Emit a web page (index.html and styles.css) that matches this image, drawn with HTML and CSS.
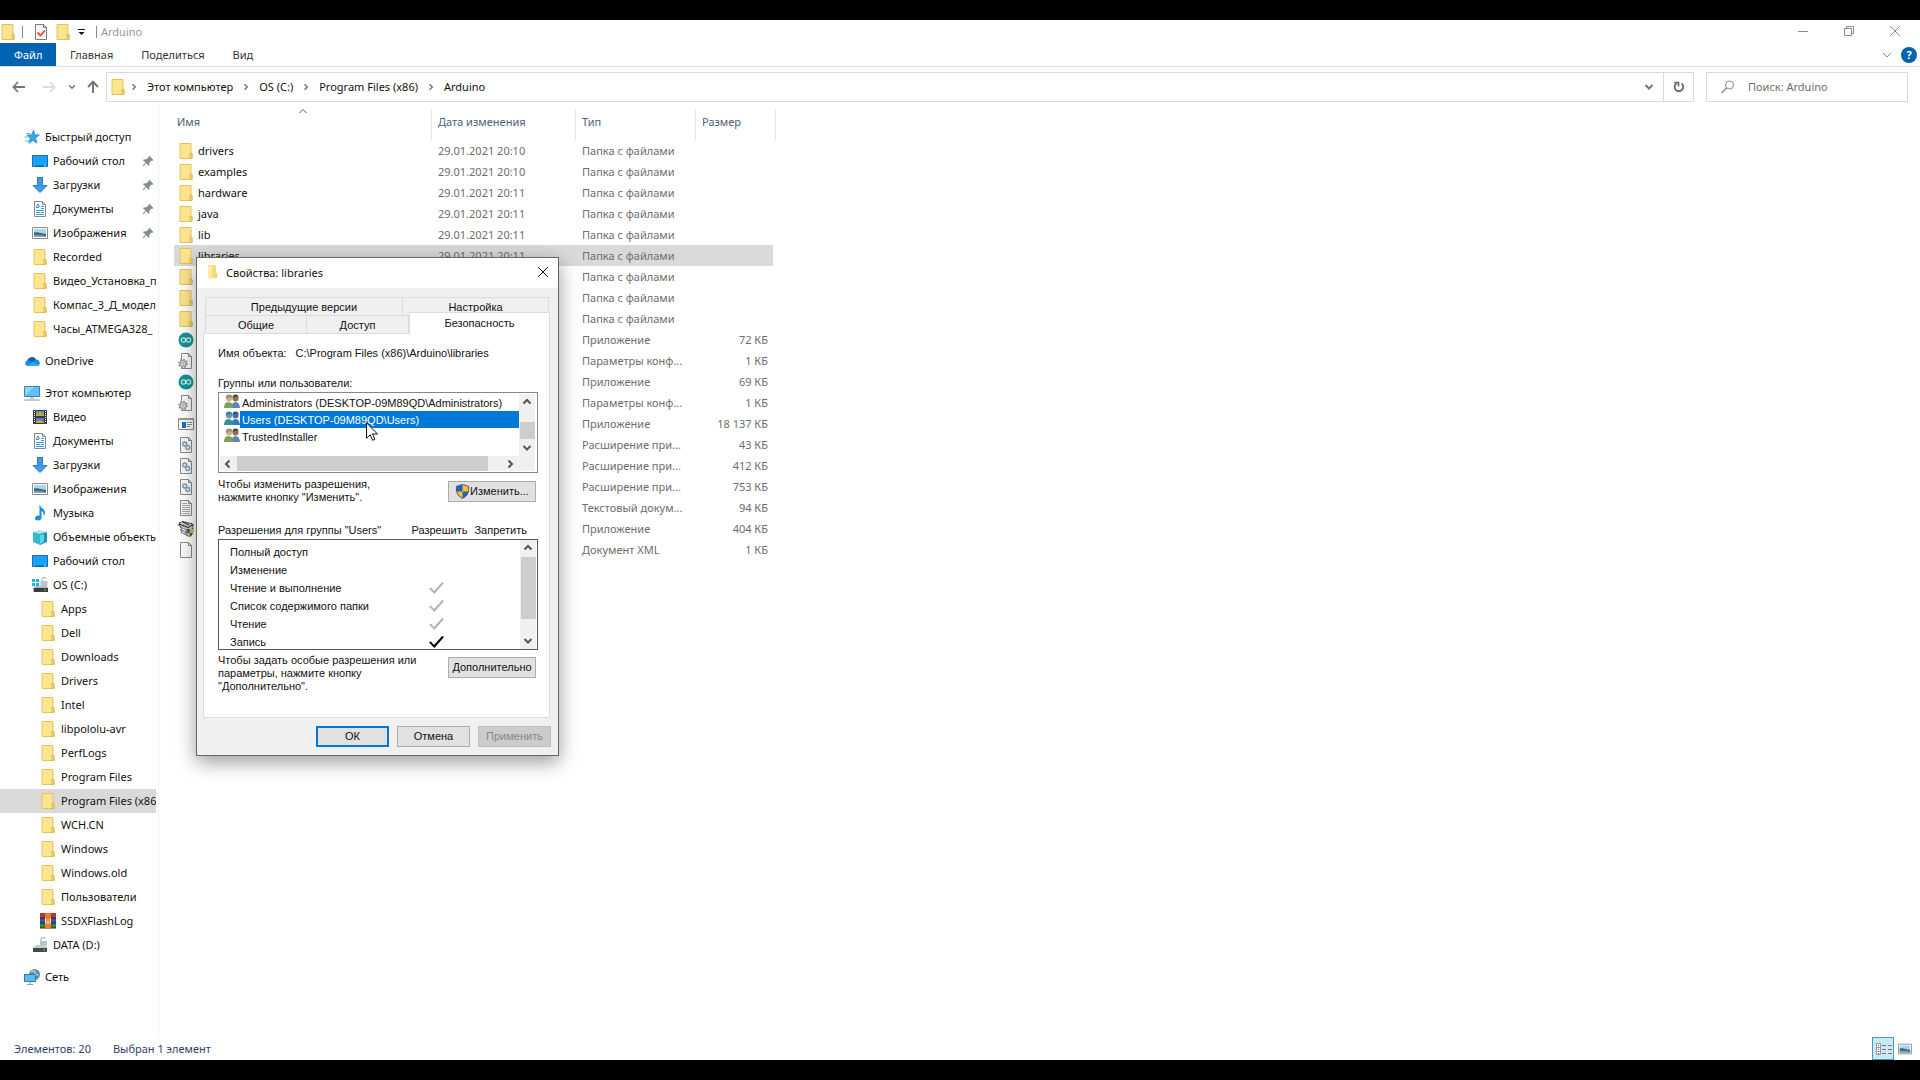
FILE: index.html
```html
<!DOCTYPE html>
<html lang="ru">
<head>
    <meta charset="UTF-8">
    <meta name="viewport" content="width=device-width, initial-scale=1.0">
    <title>Arduino</title>
    <link rel="stylesheet" href="styles.css">
</head>
<body>
    <!-- icon set -->
    <svg class="icon-defs" aria-hidden="true">
        <symbol id="i-folder" viewBox="0 0 16 16">
            <path d="M2 .5h11v10h1v5H2z" fill="#fde48e" stroke="#e6c35a"/>
            <path d="M12 15.500v-5h2v5z" fill="#fbdc78" stroke="#dcb74f"/>
        </symbol>
        <symbol id="i-folder-open" viewBox="0 0 16 16">
            <path d="M4 1h8v13H4z" fill="#fbd978"/>
            <path d="M4 1l4 2v13l-4-2z" fill="#ffebab"/>
            <path d="M12 9h1v5h-2z" fill="#f3cc62"/>
        </symbol>
        <symbol id="i-props" viewBox="0 0 16 16">
            <path d="M2.500.5h8l3 3v12h-11z" fill="#f8f8f8" stroke="#7d7d7d"/>
            <path d="M10.500.5v3h3" fill="none" stroke="#7d7d7d"/>
            <path d="M4.500 8.500l3 3 4.500-5" fill="none" stroke="#d9532c" stroke-width="1.800"/>
        </symbol>
        <symbol id="i-star" viewBox="0 0 16 16">
            <path d="M9.500 1l1.300 4.700 4.700.2-3.900 3 1.400 5.300-4.200-2.800-4 3.100 1.300-5.200L3 6l4.700-.3z" fill="#35a7ea" stroke="#1b7fc4" stroke-width=".6"/>
            <path d="M2 4.500h4M.5 8h4M1 12h4" stroke="#5db9ef"/>
        </symbol>
        <symbol id="i-desktop" viewBox="0 0 16 16">
            <path d="M.5 2.500h15v11H.5z" fill="#18a0fb" stroke="#1271b8"/>
            <path d="M1 13h14" stroke="#0b5c9c"/>
            <path d="M2 13h1M12 13h2" stroke="#c5e6ff"/>
        </symbol>
        <symbol id="i-down" viewBox="0 0 16 16">
            <path d="M5.500.5h5v8h4.500L8 15.500 1 8.500h4.500z" fill="#3f9be6" stroke="#2b7cc2"/>
        </symbol>
        <symbol id="i-doc" viewBox="0 0 16 16">
            <path d="M2.500.5h8l3 3v12h-11z" fill="#fff" stroke="#828a91"/>
            <path d="M10.500.5v3h3" fill="#ddd" stroke="#828a91"/>
            <path d="M4 6.500h3M9 5.500h3M9 7.500h3M4 9.500h8M4 11.500h4M4 13.500h8M9 11.500h3" stroke="#3c9ad6"/>
            <path d="M4.500 6l1.500-3 1.500 3" fill="none" stroke="#2f86c4"/>
        </symbol>
        <symbol id="i-pic" viewBox="0 0 16 16">
            <path d="M.5 2.500h15v11H.5z" fill="#fff" stroke="#8a8a8a"/>
            <path d="M2 4h12v8H2z" fill="#a9d3f5"/>
            <path d="M2 7.500c4-1 7 1 12 1.500v3H2z" fill="#3d6a78"/>
            <path d="M2 10.500c4-1 8 0 12 .5v1H2z" fill="#7fa6b8"/>
        </symbol>
        <symbol id="i-pin" viewBox="0 0 16 16">
            <path d="M9.500 3l4 4-1 .8-.9-.4-2.300 2.400.3 2.200-1 .8-2.400-2.500L3 13.500l-.5-.5 3-3.400L3 7.200l.9-1 2.200.4 2.300-2.300-.1-.6z" fill="#7f8b95"/>
        </symbol>
        <symbol id="i-cloud" viewBox="0 0 16 16">
            <path d="M3 13a3 3 0 0 1 0-5.500A5 5 0 0 1 12 6.500a3.500 3.500 0 0 1 2 6.500z" fill="#1b8be0"/>
            <path d="M4 7a4.500 4.500 0 0 1 8-.5L8 9z" fill="#0d5fb3"/>
            <path d="M3 13l6-4 6 3-1 1z" fill="#2fa8f0"/>
        </symbol>
        <symbol id="i-pc" viewBox="0 0 16 16">
            <path d="M.5 1.500h15v10H.5z" fill="#5cc0fa" stroke="#4b7f9e"/>
            <path d="M1 11V2h9z" fill="#8ad6ff"/>
            <path d="M6 13h4M0 15h16" stroke="#8b9aa4"/>
        </symbol>
        <symbol id="i-video" viewBox="0 0 16 16">
            <path d="M1 1h14v14H1z" fill="#3a3a3a"/>
            <path d="M4 2h8v5H4z" fill="#5d8fd6"/>
            <path d="M4 9h8v5H4z" fill="#4d7ec5"/>
            <path d="M4 5l4-2 4 3v1H4zM4 12l4-1 4 2v1H4z" fill="#c3a53a"/>
            <path d="M2.500 2v12M13.500 2v12" stroke="#fff" stroke-dasharray="1 1"/>
        </symbol>
        <symbol id="i-music" viewBox="0 0 16 16">
            <path d="M8 0c.5 3 5 4 5 7.500 0 1.500-.6 2.500-1.500 3.500.6-3-.5-4.200-2-5V13c0 1.500-1.500 2.500-3.500 2.500S3 14.500 3 13.200C3 11.500 5.500 10 7.500 10.700V0z" fill="#1690dc"/>
        </symbol>
        <symbol id="i-cube" viewBox="0 0 16 16">
            <path d="M1 3l6-2 8 2-7 3z" fill="#a4e9f2"/>
            <path d="M1 3l7 2v11l-7-3z" fill="#36b8cb"/>
            <path d="M8 5l7-2v10l-7 3z" fill="#1e93a9"/>
            <path d="M8 6l4-1v8l-4 2z" fill="#5fd2e0"/>
        </symbol>
        <symbol id="i-osdrive" viewBox="0 0 16 16">
            <path d="M0 2h3v3H0zM4 2h3v3H4zM0 6h3v3H0zM4 6h3v3H4z" fill="#1fb2ea"/>
            <path d="M10 4V2.500a2 2 0 0 1 4-.5" fill="none" stroke="#9ab"/>
            <path d="M8.500 4h7v5h-7z" fill="#b9c4cc"/>
            <path d="M3 9h12l1 2v4H1v-4z" fill="#b8bcc0"/>
            <path d="M2 11h14v4H2z" fill="#3a3d40"/>
            <path d="M12 13h2" stroke="#4be04b"/>
        </symbol>
        <symbol id="i-drive" viewBox="0 0 16 16">
            <path d="M9 4V2.500a2 2 0 0 1 4-.5" fill="none" stroke="#8fa3b3"/>
            <path d="M8 4h7v5H8z" fill="#b3c3cf"/>
            <path d="M4 8h9l2 3H1z" fill="#c9cccf"/>
            <path d="M1 11h14v4H1z" fill="#45484b"/>
            <path d="M11 13h2" stroke="#4be04b"/>
        </symbol>
        <symbol id="i-rar" viewBox="0 0 16 16">
            <path d="M0 0h16v5H0z" fill="#b8324a"/>
            <path d="M0 5h16v5H0z" fill="#3650b0"/>
            <path d="M0 10h16v5H0z" fill="#2b8a3c"/>
            <path d="M0 5h16M0 10h16M0 15h16" stroke="#222"/>
            <path d="M5 0h6v15H5z" fill="#ee7a2c"/>
            <path d="M5.500 5v5h5V5M8 6v3" stroke="#f4e4c8" fill="none"/>
        </symbol>
        <symbol id="i-net" viewBox="0 0 16 16">
            <circle cx="10.500" cy="5.500" r="5.500" fill="#5d8ea8"/>
            <path d="M7 3c2-2 5-1 4 1s2 3 3 1" fill="none" stroke="#a8d3e4" stroke-width="1.500"/>
            <path d="M.5 5.500h11v7H.5z" fill="#55bdf9" stroke="#44748e"/>
            <path d="M5 14h2M3 15.500h6" stroke="#8b9aa4"/>
        </symbol>
        <symbol id="i-arduino" viewBox="0 0 16 16">
            <circle cx="8" cy="8" r="7.500" fill="#179297"/>
            <circle cx="5.500" cy="8" r="2.200" fill="none" stroke="#c8ecec" stroke-width="1.200"/>
            <circle cx="10.500" cy="8" r="2.200" fill="none" stroke="#c8ecec" stroke-width="1.200"/>
        </symbol>
        <symbol id="i-page" viewBox="0 0 16 16">
            <path d="M2.500.5h8l3 3v12h-11z" fill="#fafafa" stroke="#8a8a8a"/>
            <path d="M10.500.5v3h3" fill="none" stroke="#8a8a8a"/>
        </symbol>
        <symbol id="i-ini" viewBox="0 0 16 16">
            <path d="M3.500.5h7l3 3v12h-10z" fill="#fafafa" stroke="#8a8a8a"/>
            <path d="M10.500.5v3h3" fill="none" stroke="#8a8a8a"/>
            <circle cx="5" cy="10.500" r="4" fill="#ddd" stroke="#8c8c8c" stroke-width="1.600" stroke-dasharray="1.600 1.500"/>
            <circle cx="5" cy="10.500" r="2.900" fill="#eee" stroke="#8c8c8c"/>
            <circle cx="5" cy="10.500" r="1" fill="#fff" stroke="#8c8c8c" stroke-width=".8"/>
        </symbol>
        <symbol id="i-dll" viewBox="0 0 16 16">
            <path d="M2.500.5h8l3 3v12h-11z" fill="#fafafa" stroke="#8a8a8a"/>
            <path d="M10.500.5v3h3" fill="none" stroke="#8a8a8a"/>
            <circle cx="6.700" cy="7" r="2" fill="#e6e6e6" stroke="#8c9298" stroke-width="1.300"/>
            <circle cx="9.700" cy="10.500" r="2" fill="#e3f0fa" stroke="#7fa3bd" stroke-width="1.300"/>
        </symbol>
        <symbol id="i-exe" viewBox="0 0 16 16">
            <path d="M.5 2.500h15v11H.5z" fill="#fff" stroke="#8a8a8a"/>
            <path d="M0 3h16" stroke="#9a9a9a" stroke-width="2"/>
            <path d="M4 6h4v6H4z" fill="#1473c8"/>
            <path d="M9 6.500h5M9 8.500h5M9 10.500h3" stroke="#8a8a8a"/>
        </symbol>
        <symbol id="i-txt" viewBox="0 0 16 16">
            <path d="M2.500.5h8l3 3v12h-11z" fill="#fafafa" stroke="#8a8a8a"/>
            <path d="M10.500.5v3h3" fill="none" stroke="#8a8a8a"/>
            <path d="M4 3.500h5M4 5.500h8M4 7.500h8M4 9.500h8M4 11.500h8M4 13.500h8" stroke="#a5a5a5"/>
        </symbol>
        <symbol id="i-uninst" viewBox="0 0 16 16">
            <path d="M1 2l4-1.500 10 2.500v8l-4 4.500-8-4.500V6L1 5z" fill="#c4c4c4" stroke="#111" stroke-dasharray="2 1"/>
            <path d="M1 3l9 3.500 5-3M5 1l6 3" stroke="#222" fill="none"/>
            <path d="M3 6l6 2.500v6L3 11z" fill="#8d8d8d"/>
            <path d="M4 8l4 2M4 10.500l3 1.500" stroke="#fff"/>
            <path d="M8.500 8H15v4q-1 3-3.300 4-2.200-1-3.200-4z" fill="#f3b32b"/>
            <path d="M8.500 8h3.300v4H8.500zM11.800 12H15q-1 3-3.200 4z" fill="#1c62b8"/>
        </symbol>
        <symbol id="i-users" viewBox="0 0 16 16">
            <circle cx="11.500" cy="4.500" r="3" fill="#9a6b4a"/>
            <path d="M8.500 4q0-3.500 3-3.500t3 3l-1.500-1-3 .5z" fill="#4b4038"/>
            <path d="M7.500 14q0-6 4-6t4.500 6z" fill="#5d83c0"/>
            <circle cx="5" cy="4.500" r="3" fill="#d5aa80"/>
            <path d="M2 5Q1 .5 5 .5T8 4L5 3z" fill="#8f9475"/>
            <path d="M0 14q0-6 4.500-6T9 14z" fill="#7ea255"/>
        </symbol>
        <symbol id="i-users-sel" viewBox="0 0 16 16">
            <circle cx="11.500" cy="4.500" r="3" fill="#44709c"/>
            <path d="M8.500 4q0-3.500 3-3.500t3 3l-1.500-1-3 .5z" fill="#244f82"/>
            <path d="M7.500 14q0-6 4-6t4.500 6z" fill="#2c7ecb"/>
            <circle cx="5" cy="4.500" r="3" fill="#6693ae"/>
            <path d="M2 5Q1 .5 5 .5T8 4L5 3z" fill="#3c84a6"/>
            <path d="M0 14q0-6 4.500-6T9 14z" fill="#398f93"/>
        </symbol>
        <symbol id="i-shield" viewBox="0 0 16 16">
            <path d="M8 .5l6.500 2v5q-.5 5-6.500 8-6-3-6.500-8v-5z" fill="#fbbd37"/>
            <path d="M8 .5v7.500H1.500V2.500zM8 8h6.500q-1 5-6.500 7.500z" fill="#1766c0"/>
            <path d="M8 .5l6.500 2v5q-.5 5-6.500 8-6-3-6.500-8v-5z" fill="none" stroke="#4d5a66"/>
        </symbol>
        <symbol id="i-back" viewBox="0 0 16 16">
            <path d="M14 8H2.500M7 3L2.300 8 7 13" fill="none" stroke="currentColor" stroke-width="1.800"/>
        </symbol>
        <symbol id="i-forward" viewBox="0 0 16 16">
            <path d="M2 8h11.500M9 3l4.700 5L9 13" fill="none" stroke="currentColor" stroke-width="1.800"/>
        </symbol>
        <symbol id="i-up" viewBox="0 0 16 16">
            <path d="M8 14V3M3 8l5-5.200L13 8" fill="none" stroke="currentColor" stroke-width="2"/>
        </symbol>
        <symbol id="i-chev-d" viewBox="0 0 10 10">
            <path d="M1.500 3L5 6.500 8.500 3" fill="none" stroke="currentColor" stroke-width="2"/>
        </symbol>
        <symbol id="i-chev-u" viewBox="0 0 10 10">
            <path d="M1.500 6.500L5 3l3.500 3.500" fill="none" stroke="currentColor" stroke-width="2"/>
        </symbol>
        <symbol id="i-chev-r" viewBox="0 0 10 10">
            <path d="M3.500 1.500L7 5 3.500 8.500" fill="none" stroke="currentColor" stroke-width="2"/>
        </symbol>
        <symbol id="i-chev-l" viewBox="0 0 10 10">
            <path d="M6.500 1.500L3 5l3.500 3.500" fill="none" stroke="currentColor" stroke-width="2"/>
        </symbol>
        <symbol id="i-crumb" viewBox="0 0 10 10">
            <path d="M3.500 2.200L6.300 5 3.500 7.800" fill="none" stroke="currentColor" stroke-width="1.500"/>
        </symbol>
        <symbol id="i-recent" viewBox="0 0 10 10">
            <path d="M2.200 3.500L5 6.300 7.800 3.500" fill="none" stroke="currentColor" stroke-width="1.500"/>
        </symbol>
        <symbol id="i-thin-d" viewBox="0 0 10 10">
            <path d="M1 3l4 4 4-4" fill="none" stroke="currentColor"/>
        </symbol>
        <symbol id="i-thin-u" viewBox="0 0 10 10">
            <path d="M1.500 7L5 3.500 8.500 7" fill="none" stroke="currentColor"/>
        </symbol>
        <symbol id="i-qat" viewBox="0 0 10 10">
            <path d="M1 2.500h7" stroke="#111"/>
            <path d="M1.500 5h6l-3 3z" fill="#111"/>
        </symbol>
        <symbol id="i-min" viewBox="0 0 10 10">
            <path d="M0 5.500h10" stroke="currentColor"/>
        </symbol>
        <symbol id="i-restore" viewBox="0 0 10 10">
            <path d="M.5 2.500h7v7h-7zM2.500 2.500v-2h7v7h-2" fill="none" stroke="currentColor"/>
        </symbol>
        <symbol id="i-close" viewBox="0 0 10 10">
            <path d="M0 0l10 10M10 0L0 10" fill="none" stroke="currentColor"/>
        </symbol>
        <symbol id="i-refresh" viewBox="0 0 16 16">
            <path d="M10.500 4.500a4.300 4.300 0 1 1-4.800-.2" fill="none" stroke="currentColor" stroke-width="1.800"/>
            <path d="M3.200 3.500h4.300v4" fill="none" stroke="currentColor" stroke-width="1.600"/>
        </symbol>
        <symbol id="i-search" viewBox="0 0 16 16">
            <circle cx="9.500" cy="6" r="4" fill="none" stroke="currentColor"/>
            <path d="M6.500 9L1.500 14" stroke="currentColor" stroke-width="1.300"/>
        </symbol>
        <symbol id="i-details" viewBox="0 0 18 18">
            <path d="M2.500 3.500h4v11h-4zM2.500 7.500h4M2.500 11.500h4" fill="#fff" stroke="#999"/>
            <path d="M8 5.500h4M14 5.500h4M8 9.500h4M14 9.500h4M8 13.500h4M14 13.500h4" stroke="#777"/>
            <path d="M4 5.500h1M4 9.500h1" stroke="#555"/>
            <path d="M4 13.500h1" stroke="#c22"/>
        </symbol>
        <symbol id="i-cursor" viewBox="0 0 12 19">
            <path d="M.5.8v15.500l3.700-3.500 2.400 5.500 2.200-1-2.300-5.300h5z" fill="#fff" stroke="#111"/>
        </symbol>
    </svg>

    <div class="explorer">
        <header class="titlebar">
            <div class="quick-access">
                <svg class="icon"><use href="#i-folder"/></svg>
                <span class="divider"></span>
                <svg class="icon"><use href="#i-props"/></svg>
                <svg class="icon"><use href="#i-folder"/></svg>
                <svg class="icon-sm"><use href="#i-qat"/></svg>
                <span class="divider"></span>
            </div>
            <h1>Arduino</h1>
            <div class="window-controls">
                <button type="button" aria-label="Свернуть"><svg class="icon-sm"><use href="#i-min"/></svg></button>
                <button type="button" aria-label="Свернуть в окно"><svg class="icon-sm"><use href="#i-restore"/></svg></button>
                <button type="button" aria-label="Закрыть"><svg class="icon-sm"><use href="#i-close"/></svg></button>
            </div>
        </header>

        <div class="ribbon">
            <button type="button" class="file">Файл</button>
            <button type="button">Главная</button>
            <button type="button">Поделиться</button>
            <button type="button">Вид</button>
            <div class="ribbon-right">
                <svg class="icon-sm"><use href="#i-thin-d"/></svg>
                <button type="button" class="help">?</button>
            </div>
        </div>

        <div class="navbar">
            <div class="nav-buttons">
                <button type="button" aria-label="Назад"><svg class="icon"><use href="#i-back"/></svg></button>
                <button type="button" aria-label="Вперед" disabled><svg class="icon"><use href="#i-forward"/></svg></button>
                <button type="button" class="recent" aria-label="Последние расположения"><svg class="icon-sm"><use href="#i-recent"/></svg></button>
                <button type="button" class="up" aria-label="Вверх"><svg class="icon"><use href="#i-up"/></svg></button>
            </div>
            <div class="address">
                <svg class="icon"><use href="#i-folder"/></svg>
                <svg class="icon-sm"><use href="#i-crumb"/></svg>
                <a href="#">Этот компьютер</a>
                <svg class="icon-sm"><use href="#i-crumb"/></svg>
                <a href="#">OS (C:)</a>
                <svg class="icon-sm"><use href="#i-crumb"/></svg>
                <a href="#">Program Files (x86)</a>
                <svg class="icon-sm"><use href="#i-crumb"/></svg>
                <a href="#">Arduino</a>
                <button type="button" class="history" aria-label="Предыдущие расположения"><svg class="icon-sm"><use href="#i-chev-d"/></svg></button>
                <button type="button" class="refresh" aria-label="Обновить"><svg class="icon"><use href="#i-refresh"/></svg></button>
            </div>
            <label class="search">
                <svg class="icon"><use href="#i-search"/></svg>
                <input type="text" placeholder="Поиск: Arduino" aria-label="Поиск">
            </label>
        </div>

        <main class="content">
            <nav class="sidebar">
                <div class="group">
                    <a href="#" class="root"><svg class="icon"><use href="#i-star"/></svg><span>Быстрый доступ</span></a>
                    <a href="#"><svg class="icon"><use href="#i-desktop"/></svg><span>Рабочий стол</span><svg class="icon pin"><use href="#i-pin"/></svg></a>
                    <a href="#"><svg class="icon"><use href="#i-down"/></svg><span>Загрузки</span><svg class="icon pin"><use href="#i-pin"/></svg></a>
                    <a href="#"><svg class="icon"><use href="#i-doc"/></svg><span>Документы</span><svg class="icon pin"><use href="#i-pin"/></svg></a>
                    <a href="#"><svg class="icon"><use href="#i-pic"/></svg><span>Изображения</span><svg class="icon pin"><use href="#i-pin"/></svg></a>
                    <a href="#"><svg class="icon"><use href="#i-folder"/></svg><span>Recorded</span></a>
                    <a href="#"><svg class="icon"><use href="#i-folder"/></svg><span>Видео_Установка_п</span></a>
                    <a href="#"><svg class="icon"><use href="#i-folder"/></svg><span>Компас_3_Д_модел</span></a>
                    <a href="#"><svg class="icon"><use href="#i-folder"/></svg><span>Часы_ATMEGA328_</span></a>
                </div>
                <div class="group">
                    <a href="#" class="root"><svg class="icon"><use href="#i-cloud"/></svg><span>OneDrive</span></a>
                </div>
                <div class="group">
                    <a href="#" class="root"><svg class="icon"><use href="#i-pc"/></svg><span>Этот компьютер</span></a>
                    <a href="#"><svg class="icon"><use href="#i-video"/></svg><span>Видео</span></a>
                    <a href="#"><svg class="icon"><use href="#i-doc"/></svg><span>Документы</span></a>
                    <a href="#"><svg class="icon"><use href="#i-down"/></svg><span>Загрузки</span></a>
                    <a href="#"><svg class="icon"><use href="#i-pic"/></svg><span>Изображения</span></a>
                    <a href="#"><svg class="icon"><use href="#i-music"/></svg><span>Музыка</span></a>
                    <a href="#"><svg class="icon"><use href="#i-cube"/></svg><span>Объемные объекты</span></a>
                    <a href="#"><svg class="icon"><use href="#i-desktop"/></svg><span>Рабочий стол</span></a>
                    <a href="#"><svg class="icon"><use href="#i-osdrive"/></svg><span>OS (C:)</span></a>
                    <a href="#" class="sub"><svg class="icon"><use href="#i-folder"/></svg><span>Apps</span></a>
                    <a href="#" class="sub"><svg class="icon"><use href="#i-folder"/></svg><span>Dell</span></a>
                    <a href="#" class="sub"><svg class="icon"><use href="#i-folder"/></svg><span>Downloads</span></a>
                    <a href="#" class="sub"><svg class="icon"><use href="#i-folder"/></svg><span>Drivers</span></a>
                    <a href="#" class="sub"><svg class="icon"><use href="#i-folder"/></svg><span>Intel</span></a>
                    <a href="#" class="sub"><svg class="icon"><use href="#i-folder"/></svg><span>libpololu-avr</span></a>
                    <a href="#" class="sub"><svg class="icon"><use href="#i-folder"/></svg><span>PerfLogs</span></a>
                    <a href="#" class="sub"><svg class="icon"><use href="#i-folder"/></svg><span>Program Files</span></a>
                    <a href="#" class="sub current"><svg class="icon"><use href="#i-folder"/></svg><span>Program Files (x86)</span></a>
                    <a href="#" class="sub"><svg class="icon"><use href="#i-folder"/></svg><span>WCH.CN</span></a>
                    <a href="#" class="sub"><svg class="icon"><use href="#i-folder"/></svg><span>Windows</span></a>
                    <a href="#" class="sub"><svg class="icon"><use href="#i-folder"/></svg><span>Windows.old</span></a>
                    <a href="#" class="sub"><svg class="icon"><use href="#i-folder"/></svg><span>Пользователи</span></a>
                    <a href="#" class="sub"><svg class="icon"><use href="#i-rar"/></svg><span>SSDXFlashLog</span></a>
                    <a href="#"><svg class="icon"><use href="#i-drive"/></svg><span>DATA (D:)</span></a>
                </div>
                <div class="group">
                    <a href="#" class="root"><svg class="icon"><use href="#i-net"/></svg><span>Сеть</span></a>
                </div>
            </nav>

            <section class="files">
                <table class="file-table">
                    <colgroup>
                        <col class="col-name">
                        <col class="col-date">
                        <col class="col-type">
                        <col class="col-size">
                    </colgroup>
                    <thead>
                        <tr>
                            <th>Имя<svg class="icon-sm sort"><use href="#i-thin-u"/></svg></th>
                            <th>Дата изменения</th>
                            <th>Тип</th>
                            <th>Размер</th>
                        </tr>
                    </thead>
                    <tbody>
                        <tr><td><svg class="icon"><use href="#i-folder"/></svg>drivers</td><td>29.01.2021 20:10</td><td>Папка с файлами</td><td></td></tr>
                        <tr><td><svg class="icon"><use href="#i-folder"/></svg>examples</td><td>29.01.2021 20:10</td><td>Папка с файлами</td><td></td></tr>
                        <tr><td><svg class="icon"><use href="#i-folder"/></svg>hardware</td><td>29.01.2021 20:11</td><td>Папка с файлами</td><td></td></tr>
                        <tr><td><svg class="icon"><use href="#i-folder"/></svg>java</td><td>29.01.2021 20:11</td><td>Папка с файлами</td><td></td></tr>
                        <tr><td><svg class="icon"><use href="#i-folder"/></svg>lib</td><td>29.01.2021 20:11</td><td>Папка с файлами</td><td></td></tr>
                        <tr class="selected"><td><svg class="icon"><use href="#i-folder"/></svg>libraries</td><td>29.01.2021 20:11</td><td>Папка с файлами</td><td></td></tr>
                        <tr><td><svg class="icon"><use href="#i-folder"/></svg></td><td></td><td>Папка с файлами</td><td></td></tr>
                        <tr><td><svg class="icon"><use href="#i-folder"/></svg></td><td></td><td>Папка с файлами</td><td></td></tr>
                        <tr><td><svg class="icon"><use href="#i-folder"/></svg></td><td></td><td>Папка с файлами</td><td></td></tr>
                        <tr><td><svg class="icon"><use href="#i-arduino"/></svg></td><td></td><td>Приложение</td><td>72 КБ</td></tr>
                        <tr><td><svg class="icon"><use href="#i-ini"/></svg></td><td></td><td>Параметры конф...</td><td>1 КБ</td></tr>
                        <tr><td><svg class="icon"><use href="#i-arduino"/></svg></td><td></td><td>Приложение</td><td>69 КБ</td></tr>
                        <tr><td><svg class="icon"><use href="#i-ini"/></svg></td><td></td><td>Параметры конф...</td><td>1 КБ</td></tr>
                        <tr><td><svg class="icon"><use href="#i-exe"/></svg></td><td></td><td>Приложение</td><td>18 137 КБ</td></tr>
                        <tr><td><svg class="icon"><use href="#i-dll"/></svg></td><td></td><td>Расширение при...</td><td>43 КБ</td></tr>
                        <tr><td><svg class="icon"><use href="#i-dll"/></svg></td><td></td><td>Расширение при...</td><td>412 КБ</td></tr>
                        <tr><td><svg class="icon"><use href="#i-dll"/></svg></td><td></td><td>Расширение при...</td><td>753 КБ</td></tr>
                        <tr><td><svg class="icon"><use href="#i-txt"/></svg></td><td></td><td>Текстовый докум...</td><td>94 КБ</td></tr>
                        <tr><td><svg class="icon"><use href="#i-uninst"/></svg></td><td></td><td>Приложение</td><td>404 КБ</td></tr>
                        <tr><td><svg class="icon"><use href="#i-page"/></svg></td><td></td><td>Документ XML</td><td>1 КБ</td></tr>
                    </tbody>
                </table>
            </section>
        </main>

        <footer class="statusbar">
            <span>Элементов: 20</span>
            <span>Выбран 1 элемент</span>
            <div class="view-buttons">
                <button type="button" class="active" aria-label="Таблица"><svg class="icon-md"><use href="#i-details"/></svg></button>
                <button type="button" aria-label="Крупные значки"><svg class="icon-thumb"><use href="#i-pic"/></svg></button>
            </div>
        </footer>
    </div>

    <!-- folder properties -->
    <div class="dialog" role="dialog" aria-labelledby="dialogTitle">
        <div class="dialog-title">
            <svg class="icon"><use href="#i-folder-open"/></svg>
            <h2 id="dialogTitle">Свойства: libraries</h2>
            <button type="button" aria-label="Закрыть"><svg class="icon-sm"><use href="#i-close"/></svg></button>
        </div>

        <div class="dialog-body">
            <div class="tabs">
                <div class="tab-row">
                    <button type="button" class="tab wide">Предыдущие версии</button>
                    <button type="button" class="tab">Настройка</button>
                </div>
                <div class="tab-row front">
                    <button type="button" class="tab">Общие</button>
                    <button type="button" class="tab">Доступ</button>
                    <button type="button" class="tab active">Безопасность</button>
                </div>
            </div>

            <div class="panel">
                <p class="object-name"><span>Имя объекта:</span><span>C:\Program Files (x86)\Arduino\libraries</span></p>

                <p class="caption">Группы или пользователи:</p>
                <div class="user-box">
                    <div class="user-area">
                        <ul class="users">
                            <li><svg class="icon"><use href="#i-users"/></svg><span>Administrators (DESKTOP-09M89QD\Administrators)</span></li>
                            <li class="selected"><svg class="icon"><use href="#i-users-sel"/></svg><span>Users (DESKTOP-09M89QD\Users)</span></li>
                            <li><svg class="icon"><use href="#i-users"/></svg><span>TrustedInstaller</span></li>
                        </ul>
                        <div class="scroll-v">
                            <svg class="icon-sm"><use href="#i-chev-u"/></svg>
                            <div class="thumb low"></div>
                            <svg class="icon-sm"><use href="#i-chev-d"/></svg>
                        </div>
                    </div>
                    <div class="scroll-h">
                        <svg class="icon-sm"><use href="#i-chev-l"/></svg>
                        <div class="thumb"></div>
                        <svg class="icon-sm"><use href="#i-chev-r"/></svg>
                    </div>
                </div>

                <div class="hint">
                    <p>Чтобы изменить разрешения,<br>нажмите кнопку "Изменить".</p>
                    <button type="button" class="btn"><svg class="icon"><use href="#i-shield"/></svg>Изменить...</button>
                </div>

                <div class="perm-head">
                    <span class="perm-name">Разрешения для группы "Users"</span>
                    <span>Разрешить</span>
                    <span>Запретить</span>
                </div>
                <div class="perm-box">
                    <ul class="perms">
                        <li><span>Полный доступ</span><input type="checkbox" aria-label="Полный доступ"></li>
                        <li><span>Изменение</span><input type="checkbox" aria-label="Изменение"></li>
                        <li><span>Чтение и выполнение</span><input type="checkbox" aria-label="Чтение и выполнение" checked disabled></li>
                        <li><span>Список содержимого папки</span><input type="checkbox" aria-label="Список содержимого папки" checked disabled></li>
                        <li><span>Чтение</span><input type="checkbox" aria-label="Чтение" checked disabled></li>
                        <li><span>Запись</span><input type="checkbox" aria-label="Запись" checked></li>
                    </ul>
                    <div class="scroll-v">
                        <svg class="icon-sm"><use href="#i-chev-u"/></svg>
                        <div class="thumb tall"></div>
                        <svg class="icon-sm"><use href="#i-chev-d"/></svg>
                    </div>
                </div>

                <div class="hint">
                    <p>Чтобы задать особые разрешения или параметры, нажмите кнопку "Дополнительно".</p>
                    <button type="button" class="btn">Дополнительно</button>
                </div>
            </div>

            <div class="dialog-actions">
                <button type="button" class="btn default">ОК</button>
                <button type="button" class="btn">Отмена</button>
                <button type="button" class="btn" disabled>Применить</button>
            </div>
        </div>
    </div>

    <svg class="cursor"><use href="#i-cursor"/></svg>
</body>
</html>
```
FILE: styles.css
```css
:root {
    --ui: "Noto Sans", "Open Sans", sans-serif;
    --dialog: "Liberation Sans", Arial, sans-serif;
    --accent: #0078d7;
    --line: #d9d9d9;
    --muted: #6d6d6d;
    --heading: #4c607a;
}

* {
    margin: 0;
    padding: 0;
    box-sizing: border-box;
}

body {
    background: #000;
    min-height: 100vh;
    padding: 20px 0;
    display: flex;
    font: 11px/16px var(--ui);
    color: #111;
    overflow: hidden;
}

button {
    font: inherit;
    color: inherit;
    background: none;
    border: none;
}

a {
    color: inherit;
    text-decoration: none;
}

h1, h2 {
    font-size: 11px;
    font-weight: 400;
}

ul {
    list-style: none;
}

svg {
    display: block;
    flex: none;
}

.icon-defs {
    display: none;
}

.icon {
    width: 16px;
    height: 16px;
}

.icon-md {
    width: 18px;
    height: 18px;
}

.icon-sm {
    width: 10px;
    height: 10px;
}

.icon-thumb {
    width: 14px;
    height: 14px;
}

.explorer {
    flex: 1;
    background: #fff;
    display: flex;
    flex-direction: column;
}

/* title bar */
.titlebar {
    height: 23px;
    display: flex;
    align-items: center;
}

.quick-access {
    display: flex;
    align-items: center;
    gap: 6px;
}

.divider {
    width: 1px;
    height: 12px;
    background: #8a8a8a;
    margin-right: 4px;
}

.quick-access .icon-sm {
    margin: 0 3px 0 0;
}

.titlebar h1 {
    color: #999;
}

.window-controls {
    margin-left: auto;
    padding-right: 2px;
    display: flex;
    color: #8a8a8a;
}

.window-controls button {
    width: 46px;
    height: 21px;
    margin-bottom: 2px;
    display: flex;
    align-items: center;
    justify-content: center;
}

/* ribbon */
.ribbon {
    height: 24px;
    display: flex;
    align-items: stretch;
    border-bottom: 1px solid #dadbdc;
    color: #333;
}

.ribbon > button {
    padding: 0 14px;
}

.ribbon .file {
    width: 56px;
    background: #0063b1;
    color: #fff;
}

.ribbon-right {
    margin-left: auto;
    padding-right: 3px;
    display: flex;
    align-items: center;
    gap: 9px;
    color: #8a8a8a;
}

.help {
    width: 16px;
    height: 16px;
    border-radius: 50%;
    background: #0063b1;
    color: #fff;
    font-weight: 700;
    line-height: 16px;
}

/* address row */
.navbar {
    padding: 5px 12px 0 0;
    display: flex;
    align-items: stretch;
    height: 35px;
}

.nav-buttons {
    width: 106px;
    display: flex;
    align-items: center;
    padding-left: 11px;
    color: #777;
}

.nav-buttons button:disabled {
    color: #ddd;
}

.nav-buttons button + button {
    margin-left: 14px;
}

.nav-buttons button.recent {
    margin-left: 10px;
}

.nav-buttons button.up {
    margin-left: 8px;
}

.address {
    flex: 1;
    display: flex;
    align-items: center;
    border: 1px solid var(--line);
    padding-left: 3px;
    color: #111;
}

.address .icon-sm {
    margin: 0 8px;
    color: #777;
}

.address .icon + .icon-sm {
    margin-left: 3px;
}

.address .history {
    margin-left: auto;
}

.history .icon-sm {
    margin: 0 9px;
}

.refresh {
    align-self: stretch;
    width: 30px;
    padding: 0 7px;
    border-left: 1px solid var(--line);
    color: #666;
}

.search {
    width: 202px;
    margin-left: 12px;
    border: 1px solid var(--line);
    display: flex;
    align-items: center;
    padding-left: 13px;
    gap: 12px;
    color: #888;
}

.search input {
    border: none;
    outline: none;
    width: 150px;
    font: inherit;
}

.search input::placeholder {
    color: var(--muted);
}

/* folder tree */
.content {
    flex: 1;
    display: flex;
}

.sidebar {
    width: 159px;
    padding: 23px 2px 0 0;
    border-right: 1px solid #f2f2f2;
}

.group {
    margin-bottom: 8px;
}

.sidebar a {
    height: 24px;
    padding-left: 32px;
    display: flex;
    align-items: center;
    gap: 5px;
    white-space: nowrap;
    overflow: hidden;
}

.sidebar a.root {
    padding-left: 24px;
}

.sidebar a.sub {
    padding-left: 40px;
}

.sidebar a.current {
    background: #d9d9d9;
}

.sidebar .pin {
    margin-left: auto;
}

/* file list */
.files {
    flex: 1;
    padding: 7px 0 0 15px;
}

.file-table {
    width: 602px;
    table-layout: fixed;
    border-collapse: separate;
    border-spacing: 0;
}

.col-name {
    width: 258px;
}

.col-date {
    width: 144px;
}

.col-type {
    width: 120px;
}

.col-size {
    width: 80px;
}

.file-table th {
    position: relative;
    height: 31px;
    padding: 0 6px 6px;
    text-align: left;
    font-weight: 400;
    color: var(--heading);
    border-right: 1px solid #e5e5e5;
}

.file-table th:first-child {
    padding-left: 3px;
}

.sort {
    position: absolute;
    top: -3px;
    left: 50%;
    transform: translateX(-50%);
    color: #555;
}

.file-table td {
    height: 21px;
    padding: 0 6px;
    color: var(--muted);
    white-space: nowrap;
    overflow: hidden;
}

.file-table td:first-child {
    display: flex;
    align-items: center;
    gap: 4px;
    padding-left: 4px;
    color: #111;
}

.file-table td:last-child {
    text-align: right;
    padding-right: 5px;
    border-right: 3px solid transparent;
    background-clip: padding-box;
}

.file-table .selected td {
    background-color: #d9d9d9;
}

/* status bar */
.statusbar {
    height: 23px;
    display: flex;
    align-items: center;
    padding-left: 14px;
    gap: 22px;
    color: #2d4465;
}

.view-buttons {
    margin-left: auto;
    padding-right: 8px;
    display: flex;
    align-items: center;
    gap: 4px;
}

.view-buttons .active {
    width: 22px;
    height: 23px;
    padding: 0 1px;
    border: 1px solid #3c9dbf;
    background: #cce8f4;
}

/* properties dialog */
.dialog {
    position: absolute;
    left: 196px;
    top: 257px;
    width: 363px;
    background: #f0f0f0;
    border: 1px solid #666;
    box-shadow: 0 6px 18px rgba(0, 0, 0, 0.4);
    font: 11px/13px var(--dialog);
    color: #111;
}

.dialog-title {
    height: 30px;
    background: #fff;
    display: flex;
    align-items: center;
    padding: 0 10px 2px 7px;
    gap: 6px;
    font-family: var(--ui);
}

.dialog-title button {
    margin-left: auto;
}

.dialog-body {
    padding: 9px 8px 8px 6px;
}

.tabs {
    padding: 0 1px 0 2px;
}

.tab-row {
    display: flex;
}

.tab {
    flex: 1;
    height: 18px;
    padding-top: 1px;
    border: 1px solid #dcdcdc;
    border-bottom: none;
}

.tab + .tab {
    border-left: none;
}

.tab-row .wide {
    flex: none;
    width: 198px;
}

.front .tab {
    flex: none;
    width: 102px;
}

.front .active {
    position: relative;
    z-index: 1;
    flex: 1;
    height: 22px;
    margin: -3px -1px -1px 0;
    padding-bottom: 1px;
    background: #fff;
    border-left: 1px solid #dcdcdc;
}

.panel {
    position: relative;
    height: 385px;
    background: #fff;
    border: 1px solid #dcdcdc;
    padding: 13px 11px 0 14px;
}

.object-name {
    display: flex;
    gap: 9px;
    margin-bottom: 17px;
}

.caption {
    margin-bottom: 2px;
}

.user-box {
    border: 1px solid #828790;
    padding: 1px 2px 1px 1px;
    margin-bottom: 5px;
}

.user-area {
    display: flex;
    height: 62px;
}

.users {
    flex: 1;
}

.users li {
    display: flex;
    height: 17px;
    padding-left: 4px;
}

.users span {
    flex: 1;
    padding: 3px 2px 1px;
}

.users .selected span {
    background: var(--accent);
    color: #fff;
}

.scroll-v {
    width: 16px;
    background: #f0f0f0;
    color: #555;
    display: flex;
    flex-direction: column;
    align-items: center;
    justify-content: space-between;
    padding: 3px 0;
}

.thumb {
    background: #cdcdcd;
}

.scroll-v .thumb {
    width: 15px;
}

.scroll-v .low {
    height: 17px;
    margin-top: auto;
    margin-bottom: 4px;
}

.scroll-v .tall {
    height: 62px;
    margin-top: 4px;
    margin-bottom: auto;
}

.scroll-h {
    height: 15px;
    background: #f0f0f0;
    color: #555;
    display: flex;
    align-items: center;
    padding: 0 20px 0 3px;
}

.scroll-h .thumb {
    width: 251px;
    height: 15px;
    margin: 0 auto 0 4px;
}

.hint {
    display: flex;
    justify-content: space-between;
    align-items: flex-start;
    padding-right: 2px;
}

.hint p {
    width: 210px;
}

.hint .btn {
    margin-top: 3px;
}

.btn {
    width: 88px;
    height: 21px;
    flex: none;
    display: flex;
    align-items: center;
    justify-content: center;
    background: #e1e1e1;
    border: 1px solid #adadad;
}

.btn .icon {
    width: 15px;
    height: 15px;
}

.perm-head {
    display: flex;
    gap: 7px;
    margin: 20px 11px 2px 0;
}

.perm-name {
    flex: 1;
}

.perm-box {
    height: 111px;
    border: 1px solid #555;
    display: flex;
    overflow: hidden;
    margin-bottom: 4px;
    padding-right: 1px;
}

.perms {
    flex: 1;
    padding: 3px 0 0 11px;
}

.perms li {
    height: 18px;
    display: flex;
    align-items: center;
}

.perms span {
    flex: 1;
}

.perms input {
    appearance: none;
    width: 15px;
    height: 12px;
    margin-right: 76px;
}

.perms input:checked {
    background: #000;
    clip-path: polygon(0 55%, 13% 45%, 33% 75%, 88% 0, 100% 8%, 36% 100%);
}

.perms input:disabled {
    background: #b4b4b4;
}

.dialog-actions {
    display: flex;
    justify-content: flex-end;
    gap: 8px;
    margin: 8px -1px 0 0;
}

.dialog-actions .btn {
    width: 73px;
}

.dialog-actions .default {
    border: 2px solid var(--accent);
}

.dialog-actions .btn:disabled {
    background: #ccc;
    border-color: #bfbfbf;
    color: #888;
}

.cursor {
    position: absolute;
    left: 366px;
    top: 422px;
    width: 12px;
    height: 19px;
}
```
